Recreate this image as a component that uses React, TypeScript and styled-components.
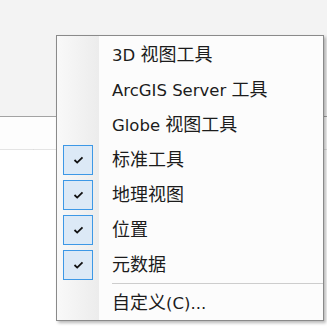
import React from 'react'
import { styled, createGlobalStyle } from 'styled-components'

type Item = {
  label: string;
  checked?: boolean;
}

const items: Item[] = [
  { label: '3D 视图工具' },
  { label: 'ArcGIS Server 工具' },
  { label: 'Globe 视图工具' },
  { label: '标准工具', checked: true },
  { label: '地理视图', checked: true },
  { label: '位置', checked: true },
  { label: '元数据', checked: true },
]

// han characters are drawn a touch larger than the latin part, like the original menu font
const renderLabel = (text: string) =>
  text.split(/([\u4e00-\u9fff]+)/).filter(Boolean).map((part, i) =>
    /[\u4e00-\u9fff]/.test(part) ? <Han key={i}>{part}</Han> : <span key={i}>{part}</span>
  )

const CheckMark = () => (
  <svg width="11" height="8" viewBox="0 0 11 8">
    <path d="M1.5 4 L4.2 6.6 L9.5 1.3" fill="none" stroke="#111" strokeWidth="1.8" />
  </svg>
)

export default function App() {
  return (
    <>
      <GlobalStyle />
      <Page>
        <Toolbar />
        <TabStrip>
          <TabDivider />
        </TabStrip>
        <Body />

        <Menu>
          {items.map((item) => (
            <MenuRow key={item.label}>
              <Gutter>
                {item.checked && (
                  <CheckBox>
                    <CheckMark />
                  </CheckBox>
                )}
              </Gutter>
              <Label>{renderLabel(item.label)}</Label>
            </MenuRow>
          ))}
          <Separator />
          <MenuRow>
            <Gutter />
            <Label>{renderLabel('自定义(C)...')}</Label>
          </MenuRow>
        </Menu>
      </Page>
    </>
  )
}

const GlobalStyle = createGlobalStyle`
  html, body {
    margin: 0;
    padding: 0;
    background: #fcfcfc;
  }
  body {
    font-family: "DejaVu Sans", "Noto Sans CJK SC", sans-serif;
  }
`

const Page = styled.div`
  position: relative;
  width: 327px;
  height: 327px;
  overflow: hidden;
  display: flex;
  flex-direction: column;
  background: #fcfcfc;
`

const Toolbar = styled.div`
  height: 116px;
  flex-shrink: 0;
  background: #f3f3f3;
  border-bottom: 1px solid #a3a3a3;
`

const TabStrip = styled.div`
  height: 32px;
  flex-shrink: 0;
  display: flex;
  background: #fdfdfd;
  border-bottom: 1px solid #e4e4e4;
`

const TabDivider = styled.div`
  width: 1px;
  height: 6px;
  margin: 32px 0 0 33px;
  background: #dcdcdc;
`

const Body = styled.div`
  flex: 1;
  background: #ffffff;
`

// context menu floats over the window
const Menu = styled.div`
  position: absolute;
  left: 56px;
  top: 35px;
  width: 266px;
  padding: 1px 0 0;
  display: flex;
  flex-direction: column;
  border: 1px solid #8a8a8a;
  background: linear-gradient(to right, #f9f9f9 0, #ececec 42px, #fcfcfc 42px);
  box-shadow: 2px 2px 3px rgba(0, 0, 0, 0.28);
`

const MenuRow = styled.div`
  display: flex;
  align-items: center;
  height: 35px;
`

const Gutter = styled.div`
  width: 42px;
  height: 100%;
  flex-shrink: 0;
  display: flex;
  align-items: center;
  justify-content: center;
`

const CheckBox = styled.div`
  width: 28px;
  height: 28px;
  display: flex;
  align-items: center;
  justify-content: center;
  border: 1px solid #3d98e6;
  background: #dce9f6;
`

const Label = styled.span`
  padding-left: 13px;
  font-size: 16.5px;
  line-height: 20px;
  color: #1c1c1c;
  white-space: nowrap;
`

const Han = styled.span`
  font-family: "Noto Sans CJK SC", sans-serif;
  font-size: 18px;
`

const Separator = styled.div`
  height: 1px;
  margin: 1px 0 1px 55px;
  background: #cdcdcd;
`
